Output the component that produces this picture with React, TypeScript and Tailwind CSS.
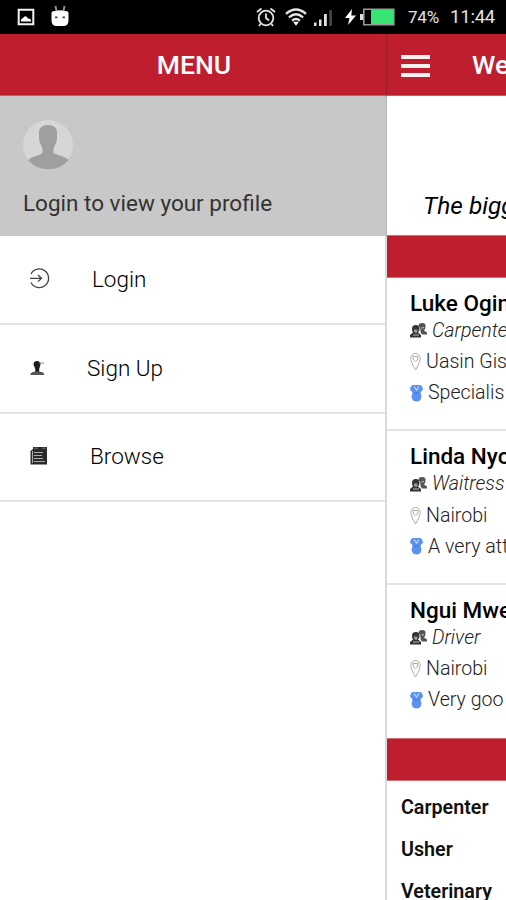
import type { ReactNode } from 'react'

interface Worker {
    name: string
    job: string
    location: string
    note: string
}

const WORKERS: Worker[] = [
    { name: 'Luke Ogin', job: 'Carpenter', location: 'Uasin Gis', note: 'Specialis' },
    { name: 'Linda Nyo', job: 'Waitress', location: 'Nairobi', note: 'A very att' },
    { name: 'Ngui Mwe', job: 'Driver', location: 'Nairobi', note: 'Very goo' },
]

const CATEGORIES = ['Carpenter', 'Usher', 'Veterinary']

export default function App(): ReactNode {
    return (
        <div className="flex h-[900px] w-[506px] flex-col overflow-hidden bg-white font-['Roboto',sans-serif] whitespace-nowrap text-black">
            <StatusBar />
            <div className="flex min-h-0 flex-1">
                <Drawer />
                <HomePage />
            </div>
        </div>
    )
}

function StatusBar(): ReactNode {
    return (
        <div className="flex h-[34px] shrink-0 items-center bg-black text-[#e4e4e4]">
            <svg className="ml-[17px] h-[18px] w-[18px]" viewBox="0 0 18 18">
                <path d="M1.7 1.7h14.6v14.6H1.7z" fill="none" stroke="#f4f4f4" strokeWidth="2" />
                <path d="M4 13.500v-2l2-1.500q2-3 4-1l1 1.500q3 0 3 2v1z" fill="#fff" />
            </svg>
            <svg className="-mt-[3px] ml-[16px] h-[22px] w-[18px]" viewBox="0 0 18 22">
                <path d="M4.500 1l1 5h7l1-5" fill="none" stroke="#999" strokeWidth="1.800" />
                <path d="M.5 8q0-2 3-2h11q3 0 3 2v7q0 6-5 6h-7q-5 0-5-6z" fill="#fff" />
                <path d="M4 11.500h2.500v1.800H4zM11.500 11.500H14v1.800h-2.500z" fill="#444" />
            </svg>
            <svg className="ml-[187px] h-[20px] w-[20px]" viewBox="0 0 20 20" fill="none" stroke="#e4e4e4" strokeWidth="1.8">
                <circle cx="10" cy="11" r="7.300" />
                <path d="M1 5l4.500-3.500M19 5l-4.500-3.500M10 6.500V11l3 2.500M4.500 17L3 19M15.500 17l1.500 2" />
            </svg>
            <svg className="ml-[9px] h-[18px] w-[22px]" viewBox="0 0 22 18" fill="none" stroke="#e4e4e4" strokeWidth="2.400">
                <path d="M1 5.800Q11-2.800 21 5.800M4 9.300Q11 3.300 18 9.300M7 12.600Q11 9.300 15 12.600" />
                <path d="M8 13.800h6L11 17.800z" fill="#fff" stroke="none" />
            </svg>
            <svg className="mt-px ml-[7px] h-[17px] w-[18px]" viewBox="0 0 18 17" fill="#e4e4e4">
                <path d="M0 13.500h2.500V17H0zM5 10.500h2.500V17H5zM10 5h2.800v12H10z" />
                <path d="M15.200 1H18v16h-2.800z" fill="#444" />
            </svg>
            <svg className="ml-[13px] h-[18px] w-[11px]" viewBox="0 0 11 18" fill="#fff">
                <path d="M7 1L0 10h4.500L3 17l8-9.500H6.300z" />
            </svg>
            <svg className="ml-[4px] h-[18px] w-[35px]" viewBox="0 0 35 18">
                <path d="M0 6h3v6H0z" fill="#ddd" />
                <path d="M3.800 1.200h30v15.600h-30z" fill="none" stroke="#999" strokeWidth="1.600" />
                <path d="M11 2h22v14H11z" fill="#36e573" />
            </svg>
            <span className="mt-[2px] ml-[13px] w-[42px] text-[17px] tracking-[-0.2px]">74%</span>
            <span className="mt-[2px] text-[18.500px] tracking-[-0.2px]">11:44</span>
        </div>
    )
}

function Drawer(): ReactNode {
    return (
        <aside className="flex w-[387px] shrink-0 flex-col border-r-2 border-[#dadada]">
            <header className="-mr-0.5 flex h-[62px] items-center justify-center border-r border-b border-r-[#a21a28] border-b-[#d05a64] bg-[#be1e2d] pl-0.5 text-[26.500px] font-medium text-white">
                MENU
            </header>
            <div className="-mr-0.5 flex h-[140px] flex-col border-r border-[#b5b5b5] bg-[#c8c8c8] pt-6 pl-[23px]">
                <svg className="h-[50px] w-[50px]" viewBox="0 0 50 50">
                    <circle cx="25" cy="25" r="25" fill="#d6d6d6" />
                    <path
                        d="M16 13q0-8 9-8t9 8v5q0 4-2 7-1.500 2-1.500 5v3q4 2 8 3 5 1.500 7 4-7 9-20 9.500Q12 49 5 40q3-3 8-4 4-1 6.500-3v-3q0-3-1.500-5-2-3-2-7z"
                        fill="#9f9f9f"
                    />
                </svg>
                <p className="mt-[17px] text-[22.500px] leading-8 text-[#333]">Login to view your profile</p>
            </div>
            <nav className="text-[22.500px] font-light text-black">
                <a className="flex h-[89px] items-center border-b-2 border-[#e3e3e3] pl-[29px]">
                    <LoginIcon />
                    <span className="ml-[42px]">Login</span>
                </a>
                <a className="flex h-[89px] items-center border-b-2 border-[#e3e3e3] pl-[30px]">
                    <PersonIcon />
                    <span className="ml-[41px]">Sign Up</span>
                </a>
                <a className="flex h-[88px] items-center border-b-2 border-[#e3e3e3] pl-[30px]">
                    <PaperIcon />
                    <span className="ml-[42px]">Browse</span>
                </a>
            </nav>
        </aside>
    )
}

function HomePage(): ReactNode {
    return (
        <main className="flex min-w-0 flex-1 flex-col overflow-hidden">
            <header className="flex h-[62px] shrink-0 items-center border-b border-[#d05a64] bg-[#be1e2d] pl-[14px] text-[26.500px] font-medium text-white">
                <div className="mt-[2px] flex flex-col gap-[5px]">
                    <i className="h-[4px] w-[29px] bg-[#faf0f0]" />
                    <i className="h-[4px] w-[29px] bg-[#faf0f0]" />
                    <i className="h-[4px] w-[29px] bg-[#faf0f0]" />
                </div>
                <span className="ml-[42px]">We</span>
            </header>
            <p className="h-[139px] shrink-0 pt-[94px] pl-[36px] text-[24.500px] leading-8 italic">The bigg</p>
            <SectionBar />
            {WORKERS.map((worker) => (
                <WorkerCard key={worker.name} worker={worker} />
            ))}
            <SectionBar />
            <ul className="pt-[6px] pl-[14px] text-[19.700px] font-semibold text-[#111]">
                {CATEGORIES.map((category) => (
                    <li key={category} className="h-[42px] leading-[42px]">
                        {category}
                    </li>
                ))}
            </ul>
        </main>
    )
}

function SectionBar(): ReactNode {
    return <div className="h-[42.500px] shrink-0 border-y border-[#d26c76] bg-[#be1e2d]" />
}

function WorkerCard({ worker }: { worker: Worker }): ReactNode {
    return (
        <section className="h-[153.500px] shrink-0 border-b-2 border-[#e3e3e3] pt-[11px] pl-[23px] text-[19.600px] font-light text-[#222] last-of-type:border-b-0">
            <h2 className="text-[22.500px] leading-[28px] font-medium text-black">{worker.name}</h2>
            <div className="flex h-7 items-center gap-[5px] italic">
                <PeopleIcon />
                {worker.job}
            </div>
            <div className="mt-0.5 flex h-[31px] items-center gap-[5px]">
                <PinIcon />
                {worker.location}
            </div>
            <div className="flex h-[31px] items-center gap-[5px]">
                <MedalIcon />
                {worker.note}
            </div>
        </section>
    )
}

function LoginIcon(): ReactNode {
    return (
        <svg className="-mt-0.5 h-[21px] w-[21px]" viewBox="0 0 21 21" fill="none" stroke="#444" strokeWidth="1.300">
            <path d="M2 6a9.300 9.300 0 1 1 0 8.500M1 10.300h11M9 7l3.500 3.300L9 13.600" />
        </svg>
    )
}

function PersonIcon(): ReactNode {
    return (
        <svg className="-mt-0.5 h-[16px] w-[16px]" viewBox="0 0 16 16">
            <path d="M3.500 4.500Q3.500 1 7 1t3.500 3.500L9.200 9v3H5.200V9z" fill="#1c1c1c" />
            <path d="M.5 15v-1.500q1-1.500 5-2H9q4 .5 5 2V15z" fill="#555" />
            <path d="M9 3h5" stroke="#888" />
        </svg>
    )
}

function PaperIcon(): ReactNode {
    return (
        <svg className="-mt-0.5 h-[18px] w-[18px]" viewBox="0 0 18 18">
            <path d="M3 0h14v17.500H.5V4L3 2z" fill="#292929" />
            <path d="M4 1.200h4M12 1.200h4" stroke="#777" />
            <path d="M4 5.500h9M4 8.500h8M4 11.500h9M4 14.500h11M2.500 4v12" stroke="#aaa" strokeWidth="1.100" />
        </svg>
    )
}

function PeopleIcon(): ReactNode {
    return (
        <svg className="h-[17px] w-[17px] shrink-0" viewBox="0 0 17 17">
            <path d="M8.500 3Q9 .8 12.500 1t3 3.500q0 3-1.500 4l3 2v2h-5l-2-3z" fill="#555" />
            <path d="M2 6.500q0-3.500 3.800-3.500t3.700 3.500-1.500 4l3 2.500v2.500H0V13l3-2.500q-1-1-1-4z" fill="#333" />
            <path d="M4 7.500h3.500v2L6.500 11h-1L4 9.500z" fill="#999" />
            <path d="M3 13h6M9.500 5l1 5M11.500 6l2.500-.5" stroke="#ddd" strokeWidth=".8" />
        </svg>
    )
}

function PinIcon(): ReactNode {
    return (
        <svg className="h-[20px] w-[11px] shrink-0" viewBox="0 0 11 20" fill="none" stroke="#aaa">
            <path d="M5.500 18Q1 10.500.8 6.500a4.700 5 0 0 1 9.400 0Q10 10.500 5.500 18z" />
            <path d="M3 4.500h5L7.500 8l-2 1.500-2-1.500z" />
        </svg>
    )
}

function MedalIcon(): ReactNode {
    return (
        <svg className="h-[19px] w-[13px] shrink-0" viewBox="0 0 13 19">
            <path d="M2.500 1h8Q12.500 2 13 5q-.5 2-2 2.500l-.5 2q1.500 2 .5 5-1 3-4.500 3T2 14.500q-1-3 .5-5L2 7.500Q.5 7 0 5q.5-3 2.500-4z" fill="#5b91f2" />
            <path d="M4 2.500l2.500 3.500L9 2.500" fill="none" stroke="#cfdfff" strokeWidth="1.100" />
            <path d="M4 9h5" stroke="#3f74d8" />
        </svg>
    )
}
